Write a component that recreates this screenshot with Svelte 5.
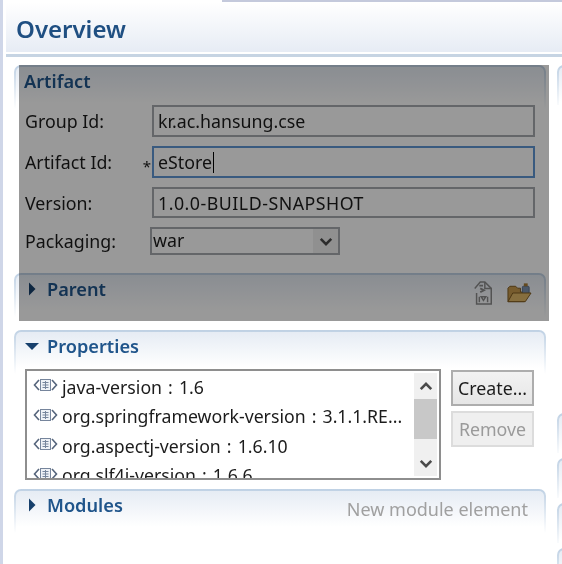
<script>
  const rows = [
    'java-version : 1.6',
    'org.springframework-version : 3.1.1.RE...',
    'org.aspectj-version : 1.6.10',
    'org.slf4j-version : 1.6.6'
  ];
</script>

{#snippet chevron(d)}
  <svg class="chev" width="14" height="9" viewBox="0 0 16 10"><path {d} fill="none" stroke="#4a4a4a" stroke-width="3"/></svg>
{/snippet}

<div class="page">
  <div class="tabline"></div>
  <header class="title"><h1>Overview</h1></header>
  <main class="columns">
    <div class="left">
      <section class="sec artifact">
        <div class="inner">
          <h2 class="plain">Artifact</h2>
          <div class="form">
            <div class="lab"><span>Group Id:</span></div>
            <div class="field">kr.ac.hansung.cse</div>
            <div class="lab"><span>Artifact Id:</span><span class="req">*</span></div>
            <div class="field focus">eStore<span class="caret"></span></div>
            <div class="lab"><span>Version:</span></div>
            <div class="field wide">1.0.0-BUILD-SNAPSHOT</div>
            <div class="lab"><span>Packaging:</span></div>
            <div class="select">
              <span class="val">war</span>
              <span class="drop">{@render chevron('M2 2 L8 8 L14 2')}</span>
            </div>
          </div>
        </div>
      </section>

      <section class="sec parent">
        <div class="inner">
          <div class="head">
            <svg class="tw" width="10" height="14" viewBox="0 0 10 14"><path d="M2 0.5 L8.5 7 L2 13.5Z" fill="#17406c"/></svg>
            <h2>Parent</h2>
            <div class="tools">
              <svg width="22" height="26" viewBox="0 0 24 28" fill="none" stroke="#8a8a8a" stroke-width="1.6">
                <path d="M3 9 L9 2 H14 L21 9 V26 H5 V14"/>
                <path d="M14 2 V9 H21"/>
                <path d="M8 6 L12 6 M9 9 L13 11 L9 13" stroke-width="2"/>
                <path d="M8 18 V24 M17 18 V24 M10 18 H15 L12.5 22Z" stroke-width="1.6"/>
              </svg>
              <svg width="25" height="22" viewBox="0 0 26 22">
                <path d="M1 20 V6 L3 4 H9 L11 6 H14 V10 H21 L18 20Z" fill="#c69a4e" stroke="#7d5a20"/>
                <rect x="16" y="4" width="7" height="8" rx="1" fill="#7d93b0" stroke="#5c6f8a"/>
                <rect x="17.5" y="1" width="4" height="3" fill="#a57a34"/>
                <path d="M1 20 L6 11 H25 L19 20Z" fill="#e0b868" stroke="#7d5a20"/>
              </svg>
            </div>
          </div>
        </div>
      </section>

      <section class="sec props">
        <div class="inner">
          <div class="head">
            <svg class="tw" width="14" height="14" viewBox="0 0 14 14"><path d="M0 4 H14 L7 11Z" fill="#17406c"/></svg>
            <h2>Properties</h2>
          </div>
          <div class="propbody">
            <div class="list">
              <div class="rows">
                {#each rows as r}
                  <div class="row">
                    <svg class="xml" width="25" height="16" viewBox="0 0 25 16" fill="none">
                      <path d="M6 3 L1.5 8 L6 13 M19 3 L23.5 8 L19 13" stroke="#56657c" stroke-width="1.6"/>
                      <rect x="7.5" y="2.5" width="10" height="11" fill="#eef1f6" stroke="#76859c"/>
                      <path d="M9.5 5.5 H15.5 M9.5 8 H15.5 M9.5 10.5 H15.5 M12.5 4 V12" stroke="#76859c"/>
                    </svg>
                    <span>{r}</span>
                  </div>
                {/each}
              </div>
              <div class="scroll">
                <span class="arrow">{@render chevron('M2 8 L8 2 L14 8')}</span>
                <span class="thumb"></span>
                <span class="arrow">{@render chevron('M2 2 L8 8 L14 2')}</span>
              </div>
            </div>
            <div class="btns">
              <div class="btn">Create...</div>
              <div class="btn off">Remove</div>
            </div>
          </div>
        </div>
      </section>

      <section class="sec modules">
        <div class="inner">
          <div class="head">
            <svg class="tw" width="10" height="14" viewBox="0 0 10 14"><path d="M2 0.5 L8.5 7 L2 13.5Z" fill="#17406c"/></svg>
            <h2>Modules</h2>
            <span class="newmod">New module element</span>
          </div>
        </div>
      </section>
    </div>

    <div class="right">
      <div class="sec stub first"><div class="inner"></div></div>
      <div class="sec stub a"><div class="inner"></div></div>
      <div class="sec stub b"><div class="inner"></div></div>
      <div class="sec stub c"><div class="inner"></div></div>
      <div class="sec stub d"><div class="inner"></div></div>
    </div>
  </main>
  <div class="dim"></div>
</div>

<style>
  :global(body) { margin: 0; background: #fff; }
  .page {
    position: relative;
    width: 562px;
    height: 564px;
    overflow: hidden;
    background: #fff;
    border-left: 3px solid #cfd6e8;
    box-sizing: border-box;
    font-family: "Noto Sans", "Open Sans", sans-serif;
    font-size: 17.8px;
    color: #1c1c1c;
    filter: blur(0.4px);
  }
  .tabline { height: 2px; margin-left: 219px; background: #c4c9dc; }
  .title {
    height: 52px;
    margin-left: 3px;
    background: linear-gradient(#fff 0, #e5ebf4 100%);
    border-bottom: 3px solid #c6d4e3;
    box-shadow: inset 0 -2px 0 #fff;
    display: flex;
    align-items: center;
  }
  h1 { margin: 0 0 0 10px; font-size: 24px; font-weight: 600; color: #1f4f82; }
  .columns {
    display: grid;
    grid-template-columns: 532px 40px;
    column-gap: 11px;
    margin: 8px 0 0 11px;
  }
  .left { display: flex; flex-direction: column; }
  .sec {
    box-sizing: border-box;
    padding: 2px 2px 0;
    border-radius: 7px 7px 0 0;
    background: linear-gradient(#bfd1e4, #fff 44px);
  }
  .inner {
    height: 100%;
    box-sizing: border-box;
    border-radius: 5px 5px 0 0;
    background: linear-gradient(#e6ecf4, #fff 36px);
  }
  .artifact { height: 208px; }
  .parent { height: 56px; }
  .props { height: 159px; margin-top: 1px; }
  .modules { height: 70px; }
  h2 { margin: 0; font-size: 18.2px; font-weight: 600; color: #20558b; }
  h2.plain {
    padding: 2px 0 0 8px;
    height: 38px;
    box-sizing: border-box;
  }
  .form {
    display: grid;
    grid-template-columns: 127px 383px;
    grid-template-rows: 32px 32px 31px 28px;
    row-gap: 9px;
    padding-left: 9px;
    align-items: center;
  }
  .lab { display: flex; justify-content: space-between; padding-right: 1px; }
  .req { line-height: 1; margin-top: 9px; font-size: 15px; }
  .field {
    height: 100%;
    box-sizing: border-box;
    border: 2px solid #a7abb0;
    padding-left: 4px;
    display: flex;
    align-items: center;
    background: #fff;
  }
  .field.wide { letter-spacing: 0.5px; }
  .field.focus { border-color: #5f97d4; }
  .caret { width: 1.5px; height: 21px; background: #000; margin-left: 1px; }
  .select {
    margin-left: -2px;
    width: 190px;
    height: 28px;
    box-sizing: border-box;
    border: 2px solid #a7abb0;
    display: flex;
    align-items: center;
    justify-content: space-between;
  }
  .val { padding-left: 1px; margin-top: -2px; }
  .drop {
    width: 25px;
    height: 100%;
    background: #f0f0f0;
    display: flex;
    align-items: center;
    justify-content: center;
  }
  .head {
    display: flex;
    align-items: center;
    height: 28px;
    padding-right: 10px;
  }
  .tw { margin-left: 11px; margin-right: 10px; flex: none; }
  .props .tw { margin-left: 9px; margin-right: 8px; }
  .tools { margin-left: auto; display: flex; gap: 13px; align-items: center; margin-top: 8px; margin-right: 2px; }
  .propbody {
    display: flex;
    padding: 9px 0 0 9px;
    align-items: flex-start;
  }
  .list {
    width: 416px;
    height: 111px;
    box-sizing: border-box;
    border: 2px solid #8e8e8e;
    background: #fff;
    display: flex;
    overflow: hidden;
  }
  .rows { flex: 1; padding-top: 1px; min-width: 0; }
  .row {
    height: 29.5px;
    display: flex;
    align-items: center;
    padding-left: 6px;
    gap: 4px;
    white-space: nowrap;
    font-size: 17.7px;
    word-spacing: 1.5px;
  }
  .xml { flex: none; margin-top: -3px; }
  .scroll {
    width: 23px;
    margin: 2px 2px 2px 0;
    background: #f0f0f0;
    display: flex;
    flex-direction: column;
    align-items: center;
  }
  .arrow { height: 26px; display: flex; align-items: center; justify-content: center; flex: none; }
  .thumb { width: 100%; height: 40px; background: #c8c8c8; flex: none; }
  .scroll .arrow:last-child { margin-top: auto; }
  .btns { margin-left: 10px; display: flex; flex-direction: column; gap: 5px; margin-top: 1px; }
  .btn {
    width: 83px;
    height: 36px;
    box-sizing: border-box;
    border: 2px solid #adadad;
    background: linear-gradient(#f2f2f2, #e6e6e6);
    display: flex;
    align-items: center;
    justify-content: center;
  }
  .btn.off { border-color: #dcdcdc; background: #efefef; color: #9a9a9a; }
  .newmod { margin-left: auto; color: #a0a0a0; font-size: 18px; margin-top: 8px; margin-right: 6px; }
  .right { display: flex; flex-direction: column; }
  .stub { height: 40px; flex: none; }
  .first { margin-bottom: 308px; }
  .a, .b, .c { margin-bottom: 5px; }
  .dim {
    position: absolute;
    left: 16px;
    top: 65px;
    width: 530px;
    height: 256px;
    background: rgba(0, 0, 0, 0.4);
  }
</style>
